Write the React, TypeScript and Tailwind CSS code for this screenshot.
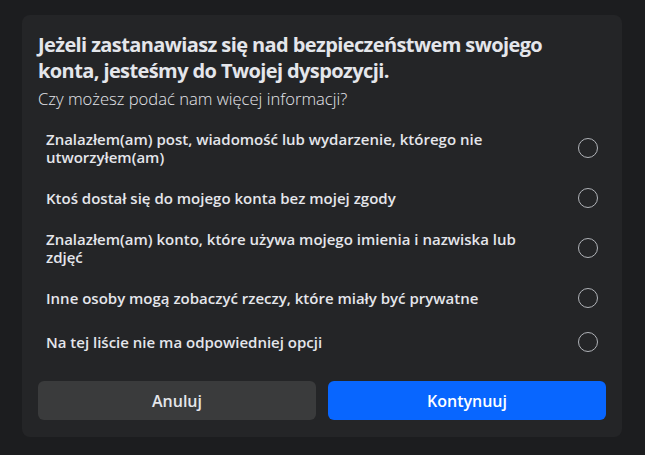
import React from "react";

const options = [
  "Znalazłem(am) post, wiadomość lub wydarzenie, którego nie utworzyłem(am)",
  "Ktoś dostał się do mojego konta bez mojej zgody",
  "Znalazłem(am) konto, które używa mojego imienia i nazwiska lub zdjęć",
  "Inne osoby mogą zobaczyć rzeczy, które miały być prywatne",
  "Na tej liście nie ma odpowiedniej opcji",
];

export default function App() {
  return (
    <div
      className="w-[645px] h-[455px] bg-[#1c1d1f] pt-[15px] pl-[22px]"
      style={{ fontFamily: '"Open Sans", "Noto Sans", sans-serif' }}
    >
      <div className="w-[600px] h-[422px] bg-[#242527] rounded-[8px] px-4 pt-[17px] pb-[17px] flex flex-col">
        <h1 className="text-[20px] leading-[26px] font-bold text-[#e4e6eb] tracking-[-0.6px]">
          Jeżeli zastanawiasz się nad bezpieczeństwem swojego konta, jesteśmy do Twojej dyspozycji.
        </h1>
        <p className="mt-[4px] text-[16.6px] leading-[22px] text-[#e4e6eb] font-light">
          Czy możesz podać nam więcej informacji?
        </p>
        <div className="mt-[10px] flex flex-col">
          {options.map((o, i) => (
            <div key={i} className="flex items-center pl-2 pr-2 min-h-[44px] py-[10px]">
              <div className="flex-1 text-[15px] leading-[18px] font-semibold text-[#e4e6eb] pr-6">{o}</div>
              <div className="w-[20px] h-[20px] rounded-full border-[1.5px] border-[#b0b3b8] shrink-0" />
            </div>
          ))}
        </div>
        <div className="mt-auto flex gap-3">
          <button className="flex-1 h-[39px] rounded-[6px] bg-[#3a3b3c] text-[#e4e6eb] text-[16px] font-semibold">
            Anuluj
          </button>
          <button className="flex-1 h-[39px] rounded-[6px] bg-[#0866ff] text-white text-[16px] font-semibold">
            Kontynuuj
          </button>
        </div>
      </div>
    </div>
  );
}
